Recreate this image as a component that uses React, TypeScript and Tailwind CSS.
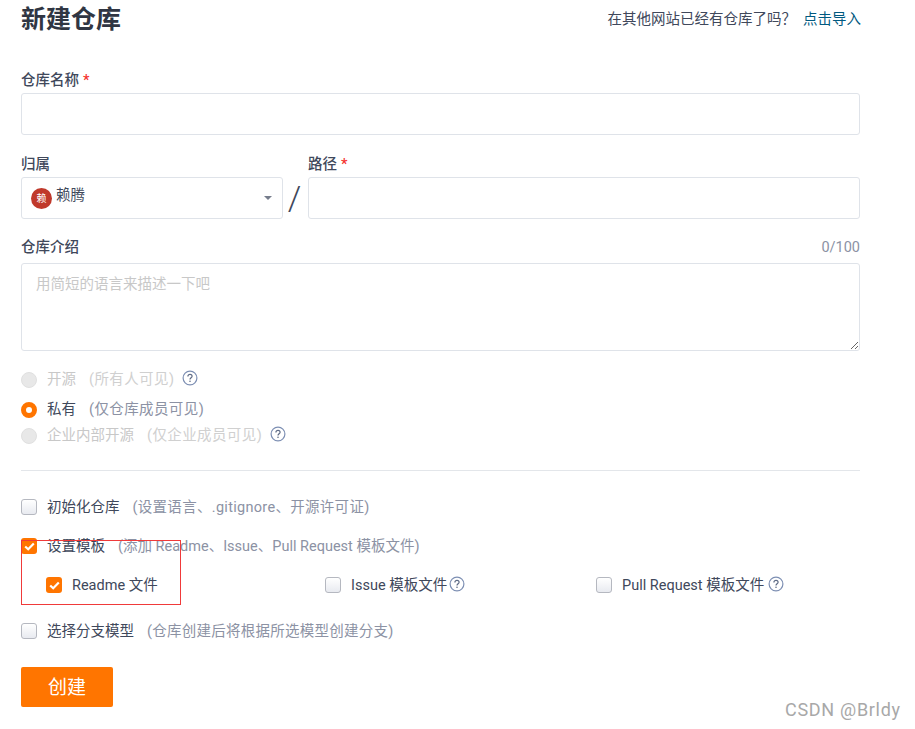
import React from 'react';

const HelpIcon = () => (
  <svg width="16" height="16" viewBox="0 0 16 16" fill="none" className="shrink-0 -mt-[3px]">
    <circle cx="8" cy="8" r="6.9" stroke="#7d8fb3" strokeWidth="1.2" />
    <path d="M5.9 6.4c0-1.2.9-2 2.1-2s2.1.8 2.1 1.9c0 1.5-2.1 1.6-2.1 3.2" stroke="#5f6b85" strokeWidth="1.2" />
    <circle cx="8" cy="11.3" r="0.8" fill="#5f6b85" />
  </svg>
);

const Radio = ({ label, hint, state, help }: { label: string; hint: string; state: 'off' | 'on'; help?: boolean }) => (
  <div className="flex items-center text-[14.5px]">
    {state === 'on' ? (
      <span className="w-4 h-4 rounded-full border-[5px] border-[#ff7500] bg-white" />
    ) : (
      <span className="w-4 h-4 rounded-full bg-[#e8e8e8] border border-[#e0e0e0]" />
    )}
    <span className={`ml-[10px] ${state === 'on' ? 'text-[#40485b]' : 'text-[#c8c8c8]'}`}>{label}</span>
    <span className={`ml-[13px] tracking-[0.4px] ${state === 'on' ? 'text-[#8c92a4]' : 'text-[#d0d0d0]'}`}>({hint})</span>
    {help && <span className="ml-2"><HelpIcon /></span>}
  </div>
);

const Check = ({ checked }: { checked?: boolean }) =>
  checked ? (
    <span className="w-4 h-4 rounded-[3px] bg-[#ff7500] flex items-center justify-center shrink-0">
      <svg width="11" height="9" viewBox="0 0 11 9" fill="none">
        <path d="M1.2 4.5l3 2.8L9.8 1.5" stroke="#fff" strokeWidth="2.2" />
      </svg>
    </span>
  ) : (
    <span className="w-4 h-4 rounded-[3px] border border-[#b5b8c0] bg-gradient-to-b from-white to-[#e8eaf0] shrink-0" />
  );

const Label = ({ text, required }: { text: string; required?: boolean }) => (
  <div className="text-[14.5px] font-medium text-[#40485b] leading-5 pt-[2px] mb-[2px]">
    {text}
    {required && <span className="text-[#f5332d] ml-1">*</span>}
  </div>
);

const boxClass = 'h-[42px] bg-white border border-[#dfe3e9] rounded-[3px]';

export default function App() {
  return (
    <div
      className="relative w-[915px] h-[729px] overflow-hidden bg-white pl-[21px] text-[#40485b]"
      style={{ fontFamily: 'Roboto, "Noto Sans CJK SC", sans-serif' }}
    >
      <div className="w-[840px]">
        {/* Header */}
        <div className="flex items-start justify-between h-[69px] pt-[3px]">
          <h1 className="text-[25px] font-bold leading-[34px] text-[#303643]">新建仓库</h1>
          <div className="text-[14.5px] leading-5 pt-[7px] whitespace-nowrap">
            在其他网站已经有仓库了吗？
            <a className="text-[#005980] ml-[7px]">点击导入</a>
          </div>
        </div>

        {/* Name */}
        <Label text="仓库名称" required />
        <div className={`${boxClass} w-[839px]`} />

        {/* Owner and path */}
        <div className="flex mt-[18px] w-[839px]">
          <div className="w-[262px]">
            <Label text="归属" />
            <div className={`${boxClass} flex items-center pl-[9px] pr-[10px]`}>
              <span className="w-[21px] h-[21px] rounded-full bg-[#c0392b] text-white text-[10px] flex items-center justify-center">赖</span>
              <span className="ml-[4px] text-[14.5px] -mt-1">赖腾</span>
              <span className="ml-auto w-0 h-0 border-x-[4px] border-x-transparent border-t-[4px] border-t-[#767d8c]" />
            </div>
          </div>
          <div className="w-[25px] flex items-end justify-center pr-[2px] text-[34px] leading-[42px] font-light text-[#40485b]">/</div>
          <div className="flex-1">
            <Label text="路径" required />
            <div className={boxClass} />
          </div>
        </div>

        {/* Description */}
        <div className="flex justify-between mt-[17px] w-[839px]">
          <Label text="仓库介绍" />
          <span className="text-[14.5px] text-[#8c92a4] leading-5 pt-[2px]">0/100</span>
        </div>
        <textarea
          readOnly
          placeholder="用简短的语言来描述一下吧"
          className="block mt-[3px] w-[839px] h-[88px] border border-[#dfe3e9] rounded-[3px] px-[14px] py-[10px] text-[14.5px] outline-none placeholder:text-[#c8c8c8]"
        />

        {/* Visibility */}
        <div className="mt-[18px] h-5"><Radio label="开源" hint="所有人可见" state="off" help /></div>
        <div className="mt-[10px] h-5"><Radio label="私有" hint="仅仓库成员可见" state="on" /></div>
        <div className="mt-[6px] h-5"><Radio label="企业内部开源" hint="仅企业成员可见" state="off" help /></div>

        <div className="w-[839px] h-px bg-[#e3e6ea] mt-[25px]" />

        {/* Options */}
        <div className="flex items-center h-5 mt-[26px] text-[14.5px]">
          <Check />
          <span className="ml-[10px] mt-[2px]">初始化仓库</span>
          <span className="ml-[13px] mt-[2px] tracking-[0.3px] text-[#8c92a4]">(设置语言、.gitignore、开源许可证)</span>
        </div>
        <div className="flex items-center h-5 mt-[19px] text-[14.5px]">
          <Check checked />
          <span className="ml-[10px] mt-[2px]">设置模板</span>
          <span className="ml-[13px] mt-[2px] text-[#8c92a4]">(添加 Readme、Issue、Pull Request 模板文件)</span>
        </div>
        <div className="flex items-center h-5 mt-[19px] text-[14.5px]">
          <div className="w-[304px] pl-[25px] flex items-center">
            <Check checked />
            <span className="ml-[10px] mt-[2px]">Readme 文件</span>
          </div>
          <div className="w-[271px] flex items-center">
            <Check />
            <span className="ml-[10px] mt-[2px]">Issue 模板文件</span>
            <span className="ml-[2px]"><HelpIcon /></span>
          </div>
          <div className="flex items-center">
            <Check />
            <span className="ml-[10px] mt-[2px]">Pull Request 模板文件</span>
            <span className="ml-1"><HelpIcon /></span>
          </div>
        </div>
        <div className="flex items-center h-5 mt-[26px] text-[14.5px]">
          <Check />
          <span className="ml-[10px] mt-[2px]">选择分支模型</span>
          <span className="ml-[13px] mt-[2px] tracking-[0.25px] text-[#8c92a4]">(仓库创建后将根据所选模型创建分支)</span>
        </div>

        <button className="mt-[26px] w-[92px] h-10 bg-[#ff7500] rounded-[2px] text-white text-[19px] pt-[3px]">创建</button>
      </div>

      {/* Annotation box */}
      <div className="absolute left-[21px] top-[540px] w-[160px] h-[65px] border border-[#f03a3a]" />
      <div className="absolute left-[785px] top-[698px] text-lg leading-6 text-[#a8a8a8] tracking-[0.7px]">CSDN @Brldy</div>
    </div>
  );
}
